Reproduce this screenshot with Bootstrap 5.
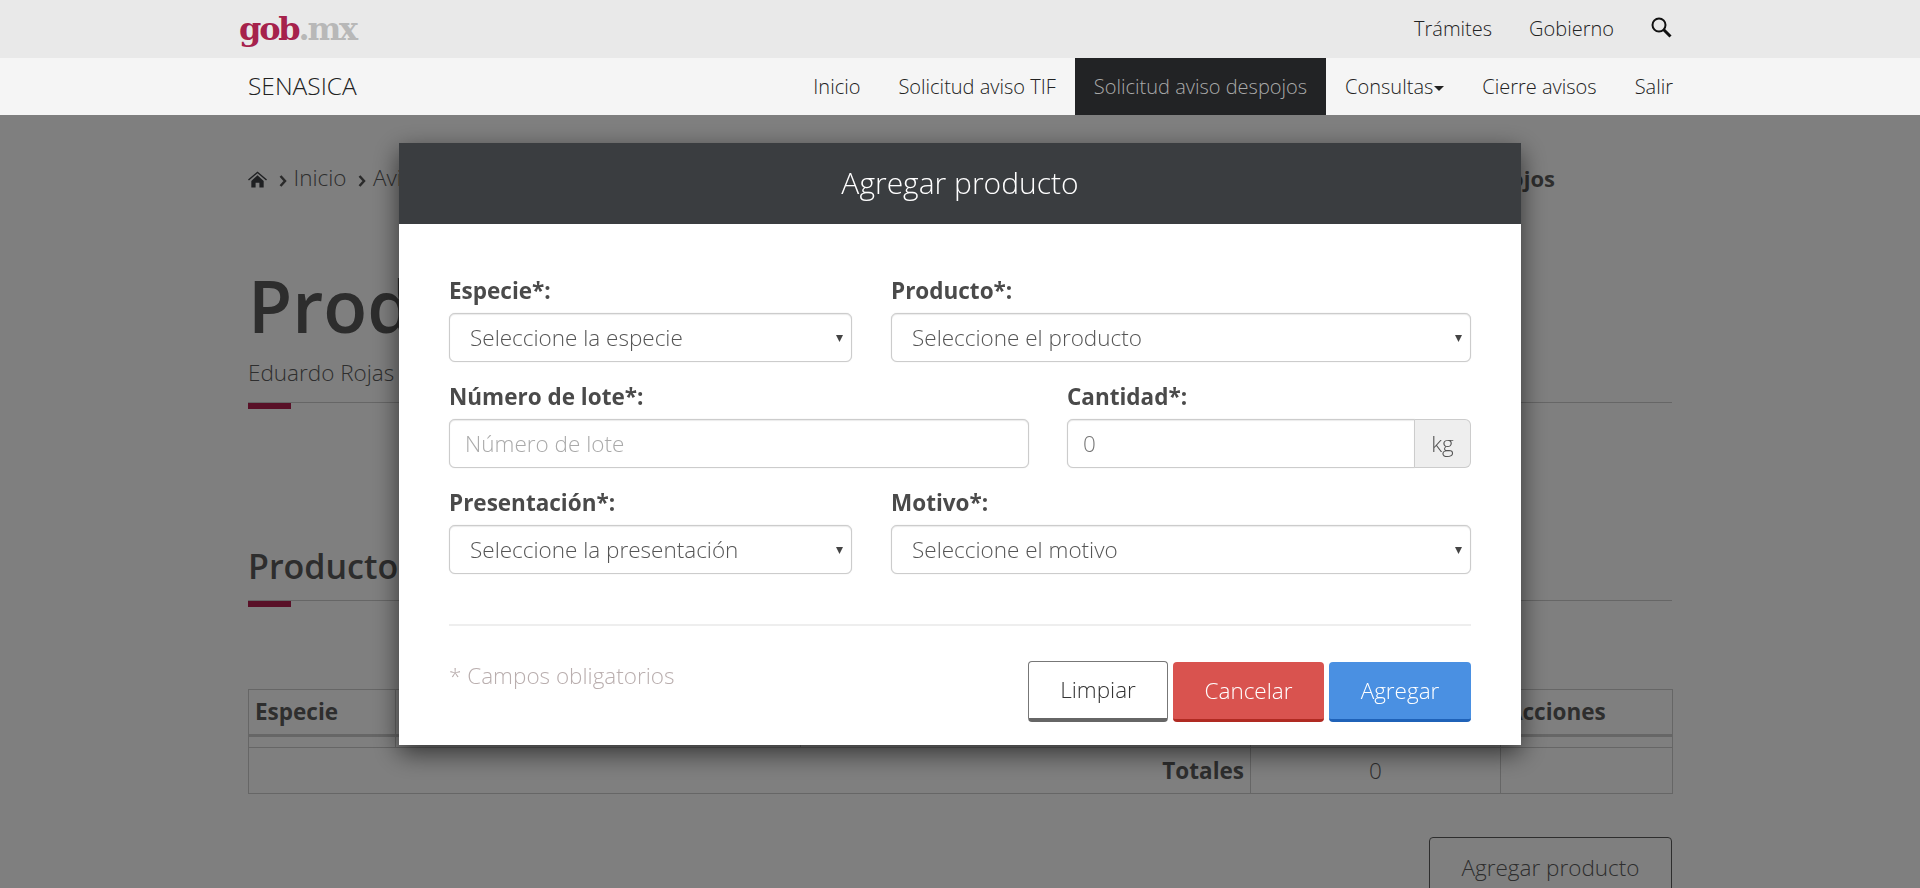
<!DOCTYPE html>
<html lang="es">
<head>
<meta charset="utf-8">
<title>SENASICA</title>
<link href="https://cdn.jsdelivr.net/npm/bootstrap@5.3.0/dist/css/bootstrap.min.css" rel="stylesheet">
<style>
html,body{height:888px;overflow:hidden;}
body{font-family:"Open Sans",sans-serif;font-weight:300;color:#5c5c5c;background:#fff;font-size:22.5px;}
.wrap{width:1424px;margin:0 auto;}
.bar-top{position:relative;z-index:1060;background:#e9e9e9;height:58px;}
.bar-sub{position:relative;z-index:1060;background:#f5f5f5;height:57px;}
.logo{font-family:"DejaVu Serif",serif;font-weight:700;font-size:32px;line-height:56px;letter-spacing:-2.2px;margin-left:-9px;color:#a6224c;}
.logo span{color:#b8b8b8;}
.top-link{color:#222;text-decoration:none;font-size:20px;font-weight:300;}
.glass{margin-bottom:4px;}
.brand{font-size:24.5px;color:#222;font-weight:300;}
.main-nav{margin-right:-1px;}
.sub-link{display:block;color:#222;font-size:20px;line-height:57px;padding:0 19px;text-decoration:none;font-weight:300;}
.sub-link.on{background:#222325;color:#aaa;}
.sub-link.last{padding-right:0;}
.caret-down{display:inline-block;width:0;height:0;border-left:5px solid transparent;border-right:5px solid transparent;border-top:5px solid #222;margin-left:1px;vertical-align:middle;}
.crumb{padding-top:47px;height:141px;line-height:32px;}
.crumb b{font-weight:700;font-size:22px;}
.crumb svg{vertical-align:-2px;}
.crumb .chev{margin:0 7px 0 11.5px;vertical-align:-1px;}
.title{font-size:72px;font-weight:600;color:#5a5a5a;line-height:98px;margin:0;}
.who{line-height:30px;margin-top:4px;padding-bottom:14px;}
.rule{position:relative;border-bottom:1px solid #ccc;}
.rule::after{content:"";position:absolute;left:0;top:calc(100% + 1px);width:43px;height:6px;background:#b3204e;}
.sec{font-size:34px;font-weight:600;color:#5a5a5a;line-height:46px;margin-top:140px;padding-bottom:11px;}
.tbl{width:100%;border-collapse:collapse;table-layout:fixed;margin-top:88px;}
.tbl th,.tbl td{border:1px solid #ccc;padding:0 6px;font-size:22.5px;}
.tbl th{height:46px;font-weight:700;border-bottom-width:3px;}
.tbl .thin td{height:12px;padding:0;}
.tbl .tot td{height:46px;}
.tbl .tot b{font-weight:700;}
.add-out{margin-top:43px;}
.btn-out{display:inline-block;border:1px solid #5c5c5c;border-radius:4px;color:#5c5c5c;width:243px;height:62px;line-height:60px;text-align:center;text-decoration:none;}
.veil{position:fixed;inset:0;background:rgba(0,0,0,.5);z-index:1040;}
.dlg{position:fixed;left:399px;top:143px;width:1122px;height:602px;background:#fff;z-index:1050;box-shadow:0 8px 24px rgba(0,0,0,.6);}
.dlg-head{background:#3a3d40;color:#fff;height:81px;line-height:80px;text-align:center;font-size:30px;font-weight:300;}
.dlg-body{padding:53px 50px 0;}
.fld{margin-bottom:21px;}
.f-s{width:403px;flex:none;}
.f-l{width:580px;flex:none;}
.lab{display:block;font-weight:700;font-size:22.5px;line-height:27px;margin-bottom:9px;color:#4a4a4a;}
.ctl{display:block;width:100%;height:49px;border:1px solid #ccc;border-radius:6px;background:#fff;font-family:inherit;font-weight:300;font-size:22.5px;color:#555;box-shadow:0 0 1px #ccc,inset 0 1px 1px rgba(0,0,0,.08);}
.ctl.form-select{padding:0 30px 0 20px;background-size:auto;background-repeat:no-repeat;background-position:right 7px center;background-image:url("data:image/svg+xml,%3Csvg xmlns='http://www.w3.org/2000/svg' width='8' height='8'%3E%3Cpath d='M0 1h7L3.5 8z' fill='%23444'/%3E%3C/svg%3E");}
.ctl.form-control{padding:0 15px;}
.ctl.form-control::placeholder{color:#aaa;}
.ctl.qty{width:auto;flex:1;border-radius:6px 0 0 6px;color:#777;}
.unit{background:#eee;border:1px solid #ccc;border-left:0;border-radius:0 6px 6px 0;width:56px;display:flex;align-items:center;justify-content:center;color:#555;}
.sepline{border:0;border-top:2px solid #eee;opacity:1;margin:50px 0 36px;}
.must{color:#b9aeae;font-weight:300;line-height:30px;margin-top:-1px;}
.act{height:60px;border-radius:4px;font-size:22.5px;font-weight:300;border:0;padding:0;}
.b-clear{width:140px;background:#fff;color:#333;border:1px solid #777;border-bottom:4px solid #666;height:61px;margin-top:-1px;}
.b-cancel{width:151px;background:#d9534f;color:#fff;border-bottom:3px solid #b02a22;}
.b-add{width:142px;background:#4a90e2;color:#fff;border-bottom:3px solid #1f62b8;}
</style>
</head>
<body>
<div class="bar-top">
  <div class="wrap d-flex align-items-center justify-content-between h-100">
    <div class="logo">gob<span>.mx</span></div>
    <div class="d-flex align-items-center" style="gap:37px">
      <a class="top-link" href="#">Trámites</a>
      <a class="top-link" href="#">Gobierno</a>
      <svg class="glass" width="21" height="21" viewBox="0 0 21 21" fill="none" stroke="#111"><circle cx="8" cy="8" r="6.500" stroke-width="2"/><path d="M12.500 12.500l7 7" stroke-width="3"/></svg>
    </div>
  </div>
</div>
<div class="bar-sub">
  <div class="wrap d-flex align-items-center justify-content-between h-100">
    <div class="brand">SENASICA</div>
    <nav class="d-flex main-nav">
      <a class="sub-link" href="#">Inicio</a>
      <a class="sub-link" href="#">Solicitud aviso TIF</a>
      <a class="sub-link on" href="#">Solicitud aviso despojos</a>
      <a class="sub-link" href="#">Consultas<span class="caret-down"></span></a>
      <a class="sub-link" href="#">Cierre avisos</a>
      <a class="sub-link last" href="#">Salir</a>
    </nav>
  </div>
</div>
<main class="wrap">
  <div class="crumb d-flex justify-content-between">
    <div><svg width="19" height="18" viewBox="0 0 20 18"><path d="M10 1L0 9.500l1 1L10 3l9 7.500 1-1zM3.500 11v7h4.500v-5h4v5h4.500v-7L10 5z" fill="#3e4044"/></svg><svg class="chev" width="8" height="12" viewBox="0 0 8 12" fill="none" stroke="#555" stroke-width="2.500"><path d="M1.500 1l4.500 5-4.500 5"/></svg>Inicio<svg class="chev" width="8" height="12" viewBox="0 0 8 12" fill="none" stroke="#555" stroke-width="2.500"><path d="M1.500 1l4.500 5-4.500 5"/></svg>Avisos</div>
    <b style="margin-right:117px">Solicitud aviso despojos</b>
  </div>
  <h1 class="title">Productos</h1>
  <div class="who rule">Eduardo Rojas</div>
  <div class="sec rule">Productos</div>
  <table class="tbl">
    <colgroup><col style="width:147px"><col style="width:405px"><col style="width:450px"><col style="width:250px"><col style="width:172px"></colgroup>
    <tr><th>Especie</th><th>Producto</th><th>Presentación</th><th>Cantidad</th><th>Acciones</th></tr>
    <tr class="thin"><td></td><td></td><td></td><td></td><td></td></tr>
    <tr class="tot"><td colspan="3" class="text-end"><b>Totales</b></td><td class="text-center">0</td><td></td></tr>
  </table>
  <div class="add-out text-end"><a class="btn-out">Agregar producto</a></div>
</main>
<div class="veil"></div>
<div class="dlg">
  <div class="dlg-head">Agregar producto</div>
  <div class="dlg-body">
    <div class="d-flex justify-content-between">
      <div class="fld f-s"><label class="lab">Especie*:</label><select class="ctl form-select"><option>Seleccione la especie</option></select></div>
      <div class="fld f-l"><label class="lab">Producto*:</label><select class="ctl form-select"><option>Seleccione el producto</option></select></div>
    </div>
    <div class="d-flex justify-content-between">
      <div class="fld f-l"><label class="lab">Número de lote*:</label><input class="ctl form-control" placeholder="Número de lote"></div>
      <div class="fld" style="width:404px"><label class="lab">Cantidad*:</label><div class="d-flex"><input class="ctl form-control qty" value="0"><span class="unit">kg</span></div></div>
    </div>
    <div class="d-flex justify-content-between">
      <div class="fld f-s mb-0"><label class="lab">Presentación*:</label><select class="ctl form-select"><option>Seleccione la presentación</option></select></div>
      <div class="fld f-l mb-0"><label class="lab">Motivo*:</label><select class="ctl form-select"><option>Seleccione el motivo</option></select></div>
    </div>
    <hr class="sepline">
    <div class="d-flex justify-content-between align-items-start">
      <div class="must">* Campos obligatorios</div>
      <div class="d-flex align-items-start" style="gap:5px">
        <button class="act b-clear" type="button">Limpiar</button>
        <button class="act b-cancel" type="button">Cancelar</button>
        <button class="act b-add" type="button">Agregar</button>
      </div>
    </div>
  </div>
</div>
<script src="https://cdn.jsdelivr.net/npm/bootstrap@5.3.0/dist/js/bootstrap.bundle.min.js"></script>
</body>
</html>
